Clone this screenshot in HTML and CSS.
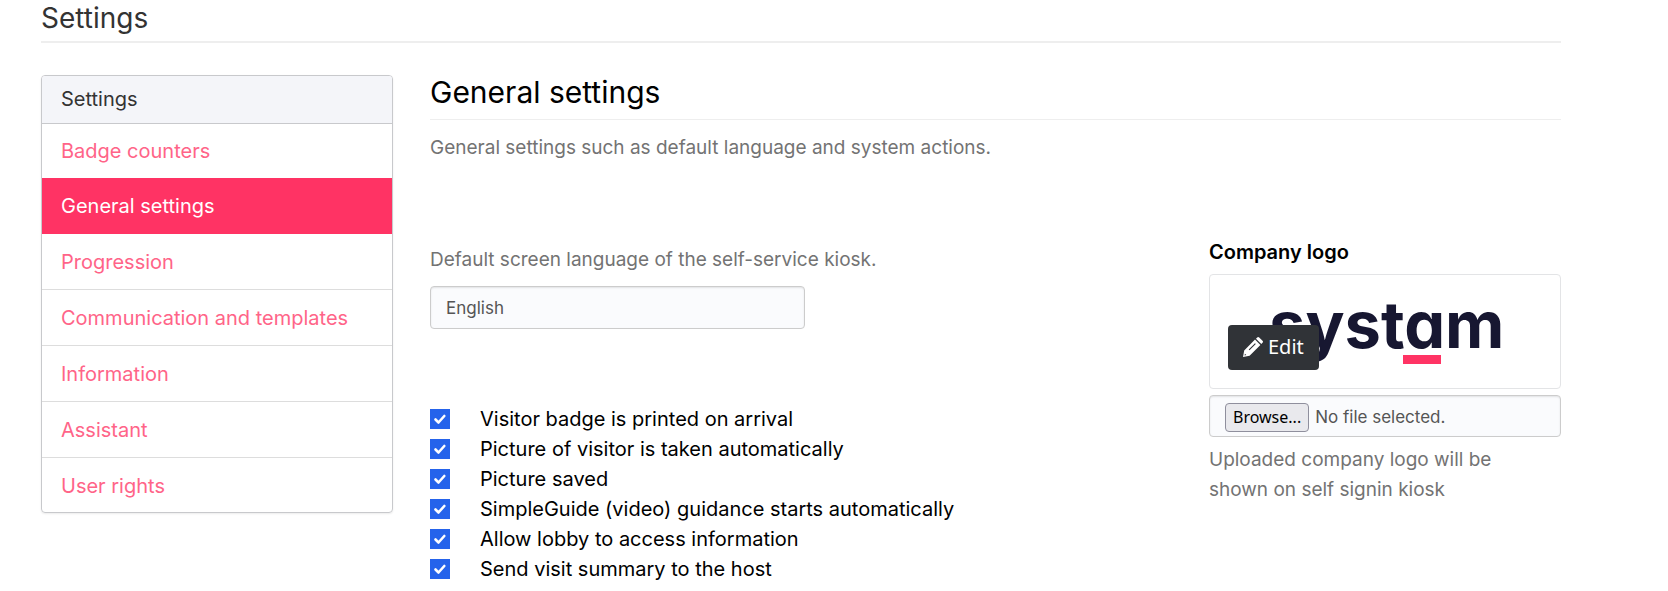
FILE: index.html
```html
<!DOCTYPE html>
<html lang="en">
<head>
<meta charset="utf-8">
<meta name="viewport" content="width=device-width, initial-scale=1">
<title>Settings</title>
<link rel="stylesheet" href="styles.css">
</head>
<body>
<div class="page">
  <header class="page-header"><h1 class="page-title">Settings</h1></header>
  <div class="columns">
    <nav class="menu" aria-label="Settings">
      <h2 class="menu-title">Settings</h2>
      <a class="menu-item" href="#">Badge counters</a>
      <a class="menu-item active" href="#" aria-current="page">General settings</a>
      <a class="menu-item" href="#">Progression</a>
      <a class="menu-item" href="#">Communication and templates</a>
      <a class="menu-item" href="#">Information</a>
      <a class="menu-item" href="#">Assistant</a>
      <a class="menu-item" href="#">User rights</a>
    </nav>
    <main class="content">
      <h2 class="section-title">General settings</h2>
      <p class="help">General settings such as default language and system actions.</p>
      <form class="form">
        <div class="options">
          <label class="help" for="language">Default screen language of the self-service kiosk.</label>
          <select class="control language" id="language"><option>English</option></select>
          <div class="checks">
            <label class="check"><input type="checkbox" checked>Visitor badge is printed on arrival</label>
            <label class="check"><input type="checkbox" checked>Picture of visitor is taken automatically</label>
            <label class="check"><input type="checkbox" checked>Picture saved</label>
            <label class="check"><input type="checkbox" checked>SimpleGuide (video) guidance starts automatically</label>
            <label class="check"><input type="checkbox" checked>Allow lobby to access information</label>
            <label class="check"><input type="checkbox" checked>Send visit summary to the host</label>
          </div>
        </div>
        <div class="company">
          <h3 class="company-title">Company logo</h3>
          <div class="logo-box">
            <div class="logo">syst<span class="logo-mark">a</span>m</div>
            <button class="edit" type="button">
              <svg class="pencil" viewBox="0 0 20 20" aria-hidden="true">
                <path fill="#fff" fill-rule="evenodd" d="M0 20l1.2-6.6L12 2.600l5.400 5.400L6.600 18.800zM1.900 16.700l-.3 1.700 1.700-.3zM5.700 12.500l.8.800 6.300-6.300-.8-.8z"/>
                <path fill="#fff" d="M13 1.700l1.200-1.200q1-1 2 0l3.300 3.300q1 1 0 2L18.300 7z"/>
              </svg>
              Edit
            </button>
          </div>
          <div class="control file">
            <input class="file-input" type="file" id="logo-file">
            <label class="browse" for="logo-file">Browse...</label>
            <span>No file selected.</span>
          </div>
          <p class="help company-help">Uploaded company logo will be shown on self signin kiosk</p>
        </div>
      </form>
    </main>
  </div>
</div>
</body>
</html>
```
FILE: styles.css
```css
* { box-sizing: border-box; }
body {
  margin: 0;
  background: #fff;
  color: #000;
  font: 20px/30px Inter, "Liberation Sans", sans-serif;
}
h1, h2, h3, p { margin: 0; font-weight: 400; }
.page { padding: 0 107px 0 41px; }
.page-header { border-bottom: 2px solid #eee; padding-bottom: 5px; }
.page-title { color: #333; font-size: 28px; line-height: 36px; }
.columns {
  display: grid;
  grid-template-columns: 352px 1fr;
  align-items: start;
  gap: 37px;
  margin-top: 32px;
}
.menu {
  display: flex;
  flex-direction: column;
  border: 1px solid #c8c9cc;
  border-radius: 4px;
  box-shadow: 0 1px 2px rgba(0, 0, 0, .08);
  overflow: hidden;
}
.menu-title {
  padding: 8px 19px 9px;
  background: #f4f5f9;
  border-bottom: 1px solid #c8c9cc;
  color: #333;
  font-size: 20px;
}
.menu-item {
  padding: 13px 19px 12px;
  border-bottom: 1px solid #ddd;
  color: #ff6488;
  text-decoration: none;
}
.menu-title + .menu-item { padding: 12px 19px; border-bottom: 0; }
.menu-item:last-child { padding-bottom: 11px; border-bottom: 0; }
.menu-item.active { background: #ff3364; border-color: #ff3364; color: #fff; }
.section-title {
  padding-bottom: 10px;
  border-bottom: 1px solid #eee;
  margin-bottom: 13px;
  font-size: 30px;
  line-height: 34px;
}
.help { color: #737373; font-size: 19px; }
.form {
  display: flex;
  justify-content: space-between;
  align-items: flex-start;
  gap: 40px;
  margin-top: 74px;
}
.options { display: flex; flex-direction: column; padding-top: 8px; }
.control {
  border: 1px solid #ccc;
  border-radius: 4px;
  background: #fafbfd;
  box-shadow: inset 0 1px 2px rgba(0, 0, 0, .1);
  color: #555;
  font: 17px/24px Inter, "Liberation Sans", sans-serif;
}
.language {
  appearance: none;
  width: 375px;
  height: 43px;
  margin-top: 11px;
  padding: 0 15px;
}
.checks { margin-top: 75px; }
.check { display: flex; align-items: center; gap: 30px; }
.check input {
  appearance: none;
  width: 20px;
  height: 20px;
  margin: 0;
  background: #2563eb url("data:image/svg+xml,%3Csvg xmlns='http://www.w3.org/2000/svg' viewBox='0 0 20 20'%3E%3Cpath d='M5.500 10.500l3 3 5.800-6.500' fill='none' stroke='%23fff' stroke-width='2.600' stroke-linecap='round' stroke-linejoin='round'/%3E%3C/svg%3E");
}
.company { width: 352px; }
.company-title { margin-bottom: 7px; font-size: 20px; font-weight: 600; }
.logo-box {
  position: relative;
  height: 115px;
  padding-left: 59px;
  border: 1px solid #e3e4e6;
  border-radius: 4px;
}
.logo {
  color: #171731;
  font-size: 65px;
  font-weight: 700;
  line-height: 100px;
  font-feature-settings: "cv11";
}
.logo-mark { position: relative; }
.logo-mark::after {
  content: "";
  position: absolute;
  left: -1px;
  bottom: 0;
  width: 38px;
  height: 9px;
  background: #ff3364;
}
.edit {
  position: absolute;
  left: 18px;
  top: 50px;
  display: flex;
  align-items: center;
  gap: 5px;
  height: 45px;
  padding: 0 15px 2px;
  border: 0;
  border-radius: 4px;
  background: #303337;
  color: #fff;
  font: 20px/30px "Noto Sans", sans-serif;
}
.pencil { width: 20px; height: 20px; }
.file {
  display: flex;
  align-items: center;
  gap: 6px;
  height: 42px;
  margin: 6px 0 8px;
  padding: 2px 15px 0;
}
.file-input { position: absolute; width: 1px; height: 1px; opacity: 0; }
.browse {
  padding: 0 7px;
  border: 1px solid #8f8f9d;
  border-radius: 4px;
  background: #e9e9ed;
  color: #000;
  font: 16px/27px "Noto Sans", sans-serif;
}
.company-help { padding-right: 40px; }
```
